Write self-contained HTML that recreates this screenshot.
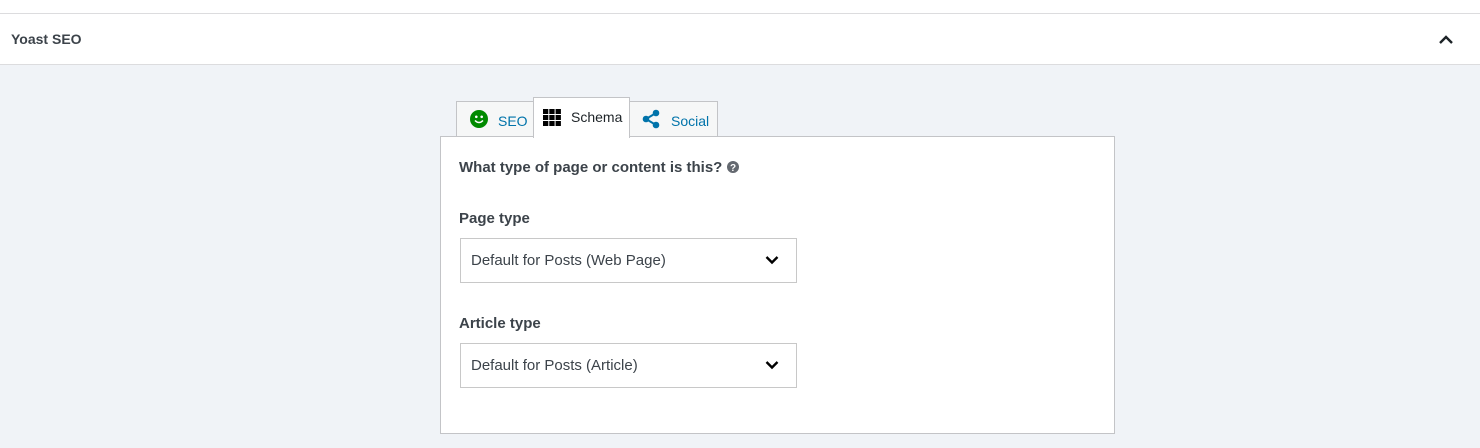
<!DOCTYPE html>
<html><head><meta charset="utf-8"><style>
*{box-sizing:border-box;margin:0;padding:0}
body{width:1480px;height:448px;background:#f0f3f7;font-family:"Liberation Sans",sans-serif;position:relative;overflow:hidden}
.top{position:absolute;left:0;top:0;width:1480px;height:14px;background:#fff;border-bottom:1px solid #dcdcde}
.hdr{position:absolute;left:0;top:14px;width:1480px;height:51px;background:#fff;border-bottom:1px solid #dcdcde}
.hdr h2{position:absolute;left:11px;top:17px;font-size:14px;font-weight:bold;color:#3c434a}
.tab{position:absolute;height:36px;border:1px solid #c3c4c7;background:#f6f7f7;font-size:14px;color:#0073aa;display:flex;align-items:center}
.panel{position:absolute;left:440px;top:136px;width:675px;height:298px;background:#fff;border:1px solid #c3c4c7}
.lbl{position:absolute;left:18px;font-size:15px;font-weight:bold;color:#3c434a}
.sel{position:absolute;left:19px;width:337px;height:45px;border:1px solid #c8c8c8;font-size:15px;color:#3c434a;padding:13px 0 0 10px}
.sel svg{position:absolute;right:17px;top:16px}
</style></head><body>
<div class="top"></div>
<div class="hdr"><h2>Yoast SEO</h2>
<svg style="position:absolute;left:1438px;top:19px" width="16" height="12" viewBox="0 0 16 12"><path d="M2 10 L8 4 L14 10" fill="none" stroke="#1d2327" stroke-width="2.4"/></svg></div>
<div class="tab" style="left:456px;top:101px;width:78px">
<svg style="margin-left:13px" width="18" height="18" viewBox="0 0 18 18"><circle cx="9" cy="9" r="9" fill="#008a00"/><circle cx="6.3" cy="6.8" r="1.3" fill="#fff"/><circle cx="11.7" cy="6.8" r="1.3" fill="#fff"/><path d="M5 10.5 Q9 14.5 13 10.5" fill="none" stroke="#fff" stroke-width="1.5"/></svg>
<span style="margin-left:10px;margin-top:3px">SEO</span></div>
<div class="tab" style="left:629px;top:101px;width:89px">
<svg style="margin-left:11px" width="20" height="20" viewBox="0 0 20 20"><path d="M15 4 L5 10 L15 16" stroke="#0073aa" stroke-width="2" fill="none"/><circle cx="15" cy="4" r="3.3" fill="#0073aa"/><circle cx="5" cy="10" r="3.3" fill="#0073aa"/><circle cx="15" cy="16" r="3.3" fill="#0073aa"/></svg>
<span style="margin-left:10px;margin-top:3px">Social</span></div>
<div class="tab" style="left:533px;top:97px;width:97px;height:41px;background:#fff;border-bottom:none;color:#1d2327;z-index:2">
<svg style="margin-left:9px;margin-top:-2px" width="18" height="17" viewBox="0 0 18 17"><g fill="#000"><rect x="0" y="0" width="5.3" height="5"/><rect x="6.3" y="0" width="5.3" height="5"/><rect x="12.6" y="0" width="5.3" height="5"/><rect x="0" y="6" width="5.3" height="5"/><rect x="6.3" y="6" width="5.3" height="5"/><rect x="12.6" y="6" width="5.3" height="5"/><rect x="0" y="12" width="5.3" height="5"/><rect x="6.3" y="12" width="5.3" height="5"/><rect x="12.6" y="12" width="5.3" height="5"/></g></svg>
<span style="margin-left:10px;margin-top:-2px">Schema</span></div>
<div class="panel">
<div class="lbl" style="top:22px">What type of page or content is this? <svg style="vertical-align:-1px" width="12" height="12" viewBox="0 0 12 12"><circle cx="6" cy="6" r="6" fill="#646970"/><text x="6" y="10" font-size="10" font-weight="bold" fill="#fff" text-anchor="middle" font-family="Liberation Sans">?</text></svg></div>
<div class="lbl" style="top:73px">Page type</div>
<div class="sel" style="top:101px">Default for Posts (Web Page)<svg width="14" height="10" viewBox="0 0 14 10"><path d="M1.5 2 L7 7.5 L12.5 2" fill="none" stroke="#000" stroke-width="2.4"/></svg></div>
<div class="lbl" style="top:178px">Article type</div>
<div class="sel" style="top:206px">Default for Posts (Article)<svg width="14" height="10" viewBox="0 0 14 10"><path d="M1.5 2 L7 7.5 L12.5 2" fill="none" stroke="#000" stroke-width="2.4"/></svg></div>
</div>
</body></html>
